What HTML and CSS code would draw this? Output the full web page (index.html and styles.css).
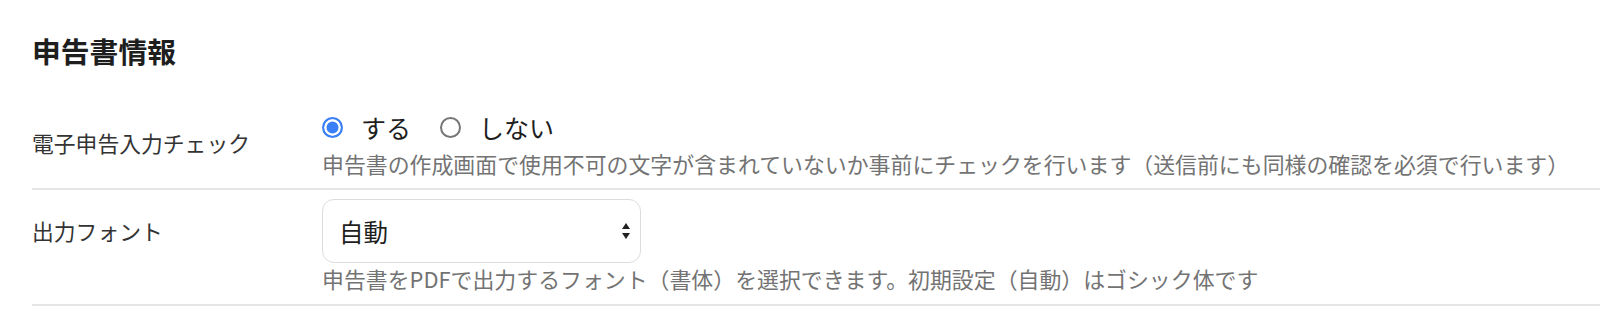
FILE: index.html
```html
<!DOCTYPE html>
<html lang="ja">
<head>
<meta charset="utf-8">
<title>申告書情報</title>
<link rel="stylesheet" href="styles.css">
</head>
<body>
<section class="panel">
  <h2 class="title">申告書情報</h2>
  <div class="row">
    <div class="label">電子申告入力チェック</div>
    <div class="field">
      <div class="radios">
        <label class="radio"><input type="radio" name="check" checked><span>する</span></label>
        <label class="radio"><input type="radio" name="check"><span>しない</span></label>
      </div>
      <p class="desc">申告書の作成画面で使用不可の文字が含まれていないか事前にチェックを行います（送信前にも同様の確認を必須で行います）</p>
    </div>
  </div>
  <div class="row">
    <div class="label">出力フォント</div>
    <div class="field">
      <div class="select-wrap">
        <select class="select">
          <option>自動</option>
          <option>明朝体</option>
          <option>ゴシック体</option>
        </select>
        <svg class="arrow" width="8" height="16" viewBox="0 0 8 16" aria-hidden="true">
          <path d="M4 0 L8 6 L0 6 Z" fill="#222"/>
          <path d="M0 10 L8 10 L4 16 Z" fill="#222"/>
        </svg>
      </div>
      <p class="desc">申告書をPDFで出力するフォント（書体）を選択できます。初期設定（自動）はゴシック体です</p>
    </div>
  </div>
</section>
</body>
</html>
```

FILE: styles.css
```css
* { box-sizing: border-box; }

html, body {
  margin: 0;
  padding: 0;
  background: #ffffff;
}

body {
  font-family: "Noto Sans CJK JP", "Noto Sans", sans-serif;
  color: #333333;
}

.panel {
  padding-left: 32px;
}

.title {
  margin: 29px 0 30px;
  font-size: 28.8px;
  line-height: 43px;
  font-weight: 700;
  color: #1e1e1e;
}

.row {
  display: flex;
  align-items: flex-start;
  padding: 9px 0 8px;
  border-bottom: 2px solid #e6e6e6;
}

.label {
  width: 290px;
  flex: none;
  padding-top: 16px;
  font-size: 21.8px;
  line-height: 32.4px;
  color: #333333;
}

.field {
  flex: 1;
  min-width: 0;
}

.radios {
  display: flex;
  align-items: center;
  height: 33px;
  margin-bottom: 4px;
}

.radio {
  display: flex;
  align-items: center;
  font-size: 25px;
  line-height: 33px;
  color: #1e1e1e;
  margin-right: 29px;
}

.radio input {
  appearance: none;
  -webkit-appearance: none;
  flex: none;
  width: 21px;
  height: 21px;
  margin: 0 18px 0 0;
  border-radius: 50%;
  border: 2px solid #767676;
  background: #ffffff;
}

.radio input:checked {
  border: 2.5px solid #3a7ff6;
  background: #3a7ff6;
  box-shadow: inset 0 0 0 2.5px #ffffff;
}

.desc {
  margin: 0;
  font-size: 21.9px;
  line-height: 32.4px;
  color: #737373;
  white-space: nowrap;
}

.select-wrap {
  position: relative;
  width: 319px;
  height: 64px;
}

.select {
  appearance: none;
  -webkit-appearance: none;
  width: 100%;
  height: 100%;
  margin: 0;
  padding: 0 0 0 16px;
  border: 1.4px solid #dcdcdc;
  border-radius: 12px;
  background: #ffffff;
  font-family: inherit;
  font-size: 24.5px;
  color: #1e1e1e;
}

.arrow {
  position: absolute;
  right: 11px;
  top: 24px;
  pointer-events: none;
}
```
